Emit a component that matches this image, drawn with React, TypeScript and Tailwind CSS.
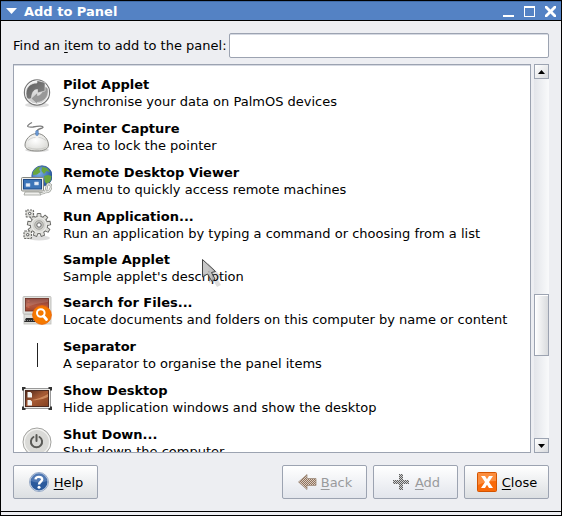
import type { ReactNode } from "react";

function PilotIcon() {
  return (
    <svg width="32" height="32" viewBox="0 0 32 32" aria-hidden="true">
      <defs>
        <linearGradient id="pilotDisc" x1="0" y1="0" x2="0" y2="1">
          <stop offset="0" stopColor="#f4f4f4" />
          <stop offset="1" stopColor="#c4c4c4" />
        </linearGradient>
        <linearGradient id="pilotArrow" x1="0" y1="0" x2="1" y2="1">
          <stop offset="0" stopColor="#5c5c5c" />
          <stop offset="1" stopColor="#8a8a8a" />
        </linearGradient>
      </defs>
      <ellipse cx="17" cy="28" rx="12" ry="2.500" fill="#ddd" />
      <circle cx="17" cy="15.500" r="12.600" fill="url(#pilotDisc)" stroke="#777" strokeWidth="1.200" />
      <circle cx="17" cy="15.500" r="11.500" fill="none" stroke="#fafafa" />
      <path d="M28 12 C29 20 24 25 17 25.500 L17 27 L11 21.500 L17.500 15.500 L17.500 18.500 C21 18 22.500 15 23 10.500 C25 9.500 27 9.500 28 12Z" fill="#989898" stroke="#e2e2e2" strokeWidth=".6" />
      <path d="M6.500 20 C4.500 11 10 6 17 6 L17 3.500 L25 5.500 L25 14 L17.500 16 L17.500 12.500 C13.500 12.500 12 15.500 11.500 21 C10 22.500 7.500 22.500 6.500 20Z" fill="url(#pilotArrow)" stroke="#e8e8e8" strokeWidth=".6" />
    </svg>
  );
}

function MouseIcon() {
  return (
    <svg width="32" height="32" viewBox="0 0 32 32" aria-hidden="true">
      <defs>
        <radialGradient id="mouseBody" cx=".45" cy=".4" r=".6">
          <stop offset="0" stopColor="#fff" />
          <stop offset="1" stopColor="#dcdcd8" />
        </radialGradient>
      </defs>
      <ellipse cx="17" cy="29" rx="12" ry="2" fill="#ddd" />
      <path d="M12 1.500 C6 5 6 6.500 13 6 C20 4.500 23 5 23 6.500 C22 8 17 7 17 11" fill="none" stroke="#7c7c7c" strokeWidth="1.300" />
      <path d="M17 12.500 C24 12.500 28.500 19 28.500 24 C28.500 28 24 30 17 30 C9 30 5 28 5 24 C5 19 10 12.500 17 12.500Z" fill="url(#mouseBody)" stroke="#8a8a86" />
      <path d="M8 19.500 C11 17 13 16.500 15.500 16.500 M26 19.500 C22 17 21 16.500 18.500 16.500" fill="none" stroke="#c0c0c0" strokeWidth=".6" />
      <path d="M8 26.500 Q17 30 26 26.500" fill="none" stroke="#cdcdc9" strokeWidth="1.300" />
      <rect x="15.700" y="9.500" width="2.600" height="5" rx="1" fill="#6c9bd6" stroke="#426fa8" strokeWidth=".5" />
    </svg>
  );
}

function RemoteDesktopIcon() {
  return (
    <svg width="32" height="32" viewBox="0 0 32 32" aria-hidden="true">
      <defs>
        <radialGradient id="globeSea" cx=".35" cy=".35" r=".7">
          <stop offset="0" stopColor="#7fb1e6" />
          <stop offset="1" stopColor="#22529a" />
        </radialGradient>
      </defs>
      <circle cx="22" cy="11" r="10.200" fill="url(#globeSea)" stroke="#2b548f" strokeWidth=".8" />
      <path d="M13 7 L17 2.500 L21 1.500 L19 4 L20.500 7 L17 9.500 L13 10Z M22 2 L27 3 L30 7 L26.500 6 L24 9 L21.500 6Z M24 11 L28 10 L31.500 11 L30.500 16 L27 19 L25 17Z" fill="#69a63d" />
      <path d="M19 28 C29 30 25 21 28 19 C33 18 32 28 24 27" fill="none" stroke="#8e918b" strokeWidth="2.400" />
      <path d="M19 28 C29 30 25 21 28 19 C33 18 32 28 24 27" fill="none" stroke="#e9eae7" strokeWidth="1.200" />
      <path d="M5 27 L19 27 L21 30 L4 30Z" fill="#efefec" stroke="#9d9f99" strokeWidth=".8" />
      <rect x="1.500" y="12.500" width="22" height="13.500" rx="1" fill="#eeeeec" stroke="#85877f" />
      <rect x="3.500" y="14.500" width="18" height="9.500" fill="#3b74b8" stroke="#204a87" />
      <path d="M6 18.500h4v3h-4z M14.500 17h4v3h-4z" fill="#e8effa" stroke="#b8cbe6" strokeWidth=".6" />
    </svg>
  );
}

function RunIcon() {
  const teeth = [0, 40, 80, 120, 160, 200, 240, 280, 320];
  return (
    <svg width="32" height="32" viewBox="0 0 32 32" aria-hidden="true">
      <ellipse cx="19" cy="29" rx="11" ry="2.500" fill="#ddd" />
      <g fill="#d9d9d5" stroke="#6b6b68">
        {teeth.map((angle) => (
          <path key={angle} d="M16.800 9 L17.300 4.500 h3.400 L21.200 9Z" transform={`rotate(${angle} 19 16)`} />
        ))}
        <circle cx="19" cy="16" r="8.700" />
      </g>
      <g fill="#dcdcd8">
        {teeth.map((angle) => (
          <path key={angle} d="M17.400 9.500 L17.800 5.300 h2.400 L20.600 9.500Z" transform={`rotate(${angle} 19 16)`} />
        ))}
      </g>
      <circle cx="19" cy="16" r="7.300" fill="#d6d6d2" stroke="#eeeeec" />
      <circle cx="19" cy="16" r="4.300" fill="#c6c6c2" stroke="#9a9a96" strokeWidth=".8" />
      <circle cx="19" cy="16" r="2.200" fill="#fff" stroke="#666" />
      <g fill="#ddddd9" stroke="#6b6b68" strokeWidth="1.200" strokeDasharray="2 1">
        <rect x="6" y="1" width="7.500" height="7" rx="1" />
        <rect x="4" y="22" width="7.500" height="7.500" rx="1" />
      </g>
      <circle cx="9.700" cy="4.500" r="1.200" fill="#fff" stroke="#555" />
      <circle cx="7.700" cy="25.700" r="1.200" fill="#fff" stroke="#555" />
    </svg>
  );
}

function SearchFilesIcon() {
  return (
    <svg width="32" height="32" viewBox="0 0 32 32" aria-hidden="true">
      <defs>
        <linearGradient id="searchScreen" x1="0" y1="0" x2="0" y2="1">
          <stop offset="0" stopColor="#7c2f24" />
          <stop offset=".6" stopColor="#b4583f" />
          <stop offset="1" stopColor="#9a4530" />
        </linearGradient>
      </defs>
      <rect x="3" y="1.500" width="28" height="17.500" rx="1" fill="#e0e0dc" stroke="#b5b5b1" strokeWidth=".8" />
      <rect x="5.500" y="3.500" width="23" height="12.500" fill="url(#searchScreen)" stroke="#6a2c20" strokeWidth=".8" />
      <path d="M6 4 H28 V7 Q17 8 6 12Z" fill="#fff" opacity=".16" />
      <path d="M7.500 6h2M7.500 9h2M7.500 12h2" stroke="#d9735b" />
      <rect x="4" y="19.500" width="27" height="9.500" fill="#dededa" stroke="#bdbdb9" strokeWidth=".8" />
      <path d="M6 23 H14 L16 27 H4Z" fill="#2c2c2c" />
      <path d="M5 25.500h10" stroke="#888" strokeDasharray="1 1" />
      <circle cx="22" cy="20" r="9.300" fill="#f57900" stroke="#ee6a08" />
      <circle cx="20.800" cy="18" r="3.800" fill="none" stroke="#fff" strokeWidth="2" />
      <path d="M23.500 21 L26.500 24.500" stroke="#fff" strokeWidth="2.800" strokeLinecap="round" />
    </svg>
  );
}

function SeparatorIcon() {
  return (
    <svg width="32" height="32" viewBox="0 0 32 32" aria-hidden="true">
      <path d="M17.500 4v24" stroke="#222" />
    </svg>
  );
}

function DesktopIcon() {
  return (
    <svg width="32" height="32" viewBox="0 0 32 32" aria-hidden="true">
      <defs>
        <linearGradient id="deskScreen" x1="0" y1="0" x2="1" y2="1">
          <stop offset="0" stopColor="#4a2417" />
          <stop offset=".5" stopColor="#a65a34" />
          <stop offset="1" stopColor="#84401f" />
        </linearGradient>
      </defs>
      <rect x="3.500" y="5.500" width="27" height="20" fill="#ececea" stroke="#999" />
      <rect x="5.500" y="7.500" width="23" height="16" fill="url(#deskScreen)" stroke="#4c2a20" />
      <path d="M12 17 Q19 16 28 11 V14 Q20 18 12 17Z" fill="#dfa071" opacity=".7" />
      <path d="M7.500 9h3l1.500 1.500v4h-4.500z M7.500 17h3l1.500 1.500v4h-4.500z" fill="#f4f4f2" />
      <path d="M3 7.500V5h2.500 M28.500 5H31v2.500 M3 23.500V26h2.500 M28.500 26H31v-2.500" fill="none" stroke="#333" strokeWidth="2" />
    </svg>
  );
}

function PowerIcon() {
  return (
    <svg width="32" height="32" viewBox="0 0 32 32" aria-hidden="true">
      <circle cx="17" cy="15" r="14" fill="#dadad7" stroke="#a2a29f" />
      <circle cx="17" cy="15" r="12.600" fill="none" stroke="#f4f4f2" strokeWidth="1.300" />
      <path d="M13.500 10a5.600 5.600 0 1 0 6 0 M16.500 8v6" fill="none" stroke="#5a5a56" strokeWidth="2" strokeLinecap="round" />
    </svg>
  );
}

function HelpIcon() {
  return (
    <svg width="22" height="22" viewBox="0 0 22 22" aria-hidden="true">
      <circle cx="11" cy="11" r="9.500" fill="#d5dfee" stroke="#8298ba" strokeWidth=".8" />
      <circle cx="11" cy="11" r="8.500" fill="#2b5a9c" />
      <path d="M3 10 A8 8 0 0 1 19 10 Q11 13 3 10Z" fill="#7396c9" opacity=".5" />
      <path d="M7.500 8.300 C7.800 5 14.300 5 14.200 8.500 C14.100 10.800 11 10.700 11 13.500" fill="none" stroke="#fff" strokeWidth="2.400" />
      <circle cx="11" cy="16.200" r="1.500" fill="#fff" />
    </svg>
  );
}

function BackIcon() {
  return (
    <svg width="20" height="20" viewBox="0 0 20 20" aria-hidden="true">
      <defs>
        <pattern id="ditherBack" width="2" height="2" patternUnits="userSpaceOnUse">
          <rect width="2" height="2" fill="#d9cdc4" />
          <path d="M0 0h1v1H0zM1 1h1v1H1z" fill="#8f7159" />
        </pattern>
      </defs>
      <path d="M1.500 10 L10 2.500 V6.500 H19 V13.500 H10 V17.500Z" fill="url(#ditherBack)" stroke="#a08d7e" strokeWidth=".8" />
    </svg>
  );
}

function AddIcon() {
  return (
    <svg width="20" height="20" viewBox="0 0 20 20" aria-hidden="true">
      <defs>
        <pattern id="ditherAdd" width="2" height="2" patternUnits="userSpaceOnUse">
          <rect width="2" height="2" fill="#d2d2d2" />
          <path d="M0 0h1v1H0zM1 1h1v1H1z" fill="#5f5f5f" />
        </pattern>
      </defs>
      <path d="M8 2h4v6h6v4h-6v6h-4v-6h-6v-4h6z" fill="url(#ditherAdd)" />
    </svg>
  );
}

function CloseIcon() {
  return (
    <svg width="22" height="22" viewBox="0 0 22 22" aria-hidden="true">
      <rect x="1.500" y="1.500" width="19" height="19" rx="1" fill="#f96a0a" stroke="#d35400" />
      <path d="M2 2h18v8Q10 10 2 14z" fill="#ffb070" opacity=".5" />
      <path d="M5 5h4l2 3.200L13 5h4l-4 6 4 6h-4l-2-3.200L9 17H5l4-6z" fill="#fff" />
    </svg>
  );
}

interface Applet {
  name: string;
  description: string;
  icon?: ReactNode;
}

const applets: Applet[] = [
  { name: "Pilot Applet", description: "Synchronise your data on PalmOS devices", icon: <PilotIcon /> },
  { name: "Pointer Capture", description: "Area to lock the pointer", icon: <MouseIcon /> },
  { name: "Remote Desktop Viewer", description: "A menu to quickly access remote machines", icon: <RemoteDesktopIcon /> },
  { name: "Run Application...", description: "Run an application by typing a command or choosing from a list", icon: <RunIcon /> },
  { name: "Sample Applet", description: "Sample applet's description" },
  { name: "Search for Files...", description: "Locate documents and folders on this computer by name or content", icon: <SearchFilesIcon /> },
  { name: "Separator", description: "A separator to organise the panel items", icon: <SeparatorIcon /> },
  { name: "Show Desktop", description: "Hide application windows and show the desktop", icon: <DesktopIcon /> },
  { name: "Shut Down...", description: "Shut down the computer", icon: <PowerIcon /> },
];

function ActionButton({ icon, label, disabled = false }: { icon: ReactNode; label: string; disabled?: boolean }) {
  return (
    <button
      type="button"
      disabled={disabled}
      className="flex h-[34px] w-[85px] items-center justify-center gap-1 rounded-xs border border-[#9ca3b1] bg-linear-to-b from-white to-[#dcdfe2] text-black disabled:to-[#e2e5ec] disabled:text-[#999a9c]"
    >
      {icon}
      <span>
        <span className="underline underline-offset-2">{label[0]}</span>
        {label.slice(1)}
      </span>
    </button>
  );
}

function ScrollArrow({ direction }: { direction: "up" | "down" }) {
  return (
    <button
      type="button"
      aria-label={direction === "up" ? "Scroll up" : "Scroll down"}
      className="flex h-[15px] shrink-0 items-center justify-center border border-[#9ca3b1] bg-linear-to-br from-white to-[#d9dbde]"
    >
      <svg width="7" height="4" viewBox="0 0 7 4" aria-hidden="true">
        <path d={direction === "up" ? "M0 4L3.500 0L7 4z" : "M0 0L3.500 4L7 0z"} />
      </svg>
    </button>
  );
}

export default function App() {
  return (
    <div className="relative flex h-screen flex-col border border-black bg-[#edeef2] font-['DejaVu_Sans',sans-serif] text-[13px] leading-[17px] text-black">
      <header className="flex h-5 shrink-0 items-center border-t border-b border-t-[#416ca8] border-b-black bg-[#5482c4] pr-1 pl-[5px] text-white">
        <button type="button" aria-label="Window menu" className="flex">
          <svg width="12" height="6" viewBox="0 0 12 6" aria-hidden="true">
            <path d="M0 0h11L5.500 6z" fill="#fff" />
          </svg>
        </button>
        <h1 className="ml-1.5 flex-1 font-bold">Add to Panel</h1>
        <div className="flex gap-2">
          {[
            { label: "Minimize", d: "M1 10h11v2H1z" },
            { label: "Maximize", d: "M1 1h11v11H1zM2 3v8h9V3z" },
            { label: "Close window", d: "M1 1h2l3.500 3.500L10 1h2v2L8.500 6.500L12 10v2h-2L6.500 8.500L3 12H1v-2l3.500-3.500L1 3z" },
          ].map(({ label, d }) => (
            <button key={label} type="button" aria-label={label} className="flex">
              <svg width="13" height="13" viewBox="0 0 13 13" aria-hidden="true">
                <path d={d} fill="#fff" fillRule="evenodd" />
              </svg>
            </button>
          ))}
        </div>
      </header>

      <main className="flex min-h-0 flex-1 flex-col px-3 pt-3 pb-3">
        <div className="flex items-center gap-0.5">
          <label htmlFor="find-item">
            Find an <span className="underline underline-offset-2">i</span>tem to add to the panel:
          </label>
          <input
            id="find-item"
            type="text"
            className="h-[25px] min-w-0 flex-1 rounded-xs border border-[#9ca3b1] bg-white px-1 shadow-[inset_0_1px_0_#d5d9e2] outline-none"
          />
        </div>

        <div className="mt-1.5 flex min-h-0 flex-1 gap-[3px]">
          <ul className="min-w-0 flex-1 overflow-hidden border border-[#9ca3b1] bg-white pt-1.5 pl-1.5 shadow-[inset_0_1px_0_#d5d9e2]">
            {applets.map(({ name, description, icon }) => (
              <li key={name} className={icon ? "flex h-11 items-center" : "flex h-[42px] items-center"}>
                <span className="flex w-[43px] shrink-0">{icon}</span>
                <span className="whitespace-nowrap">
                  <strong className="block font-bold">{name}</strong>
                  {description}
                </span>
              </li>
            ))}
          </ul>
          <div className="flex w-[15px] flex-col bg-linear-to-r from-[#e3e5ea] to-[#f9fafb]">
            <ScrollArrow direction="up" />
            <div className="grow-[215]" />
            <div className="h-[62px] border border-[#9ca3b1] bg-linear-to-r from-white to-[#d9dbde] shadow-[inset_1px_1px_0_#fff]" />
            <div className="grow-[82]" />
            <ScrollArrow direction="down" />
          </div>
        </div>

        <div className="mt-3 flex gap-1.5">
          <ActionButton icon={<HelpIcon />} label="Help" />
          <div className="flex-1" />
          <ActionButton icon={<BackIcon />} label="Back" disabled />
          <ActionButton icon={<AddIcon />} label="Add" disabled />
          <ActionButton icon={<CloseIcon />} label="Close" />
        </div>
      </main>

      <footer className="h-1 shrink-0 border-t border-black" />

      <svg className="pointer-events-none absolute top-[257px] left-[200px]" width="26" height="32" viewBox="0 0 26 32" aria-hidden="true">
        <path d="M7 5 L21 19 L16 20 L20 27 L16 29 L12 22 L8 25Z" fill="#000" opacity=".13" />
        <path d="M1.500 1.500 L14.500 13.500 L10.500 14.500 L14 21 L11 23.500 L6.500 16 L1.500 19Z" fill="#bdbdbd" fillOpacity=".85" stroke="#444" />
      </svg>
    </div>
  );
}
